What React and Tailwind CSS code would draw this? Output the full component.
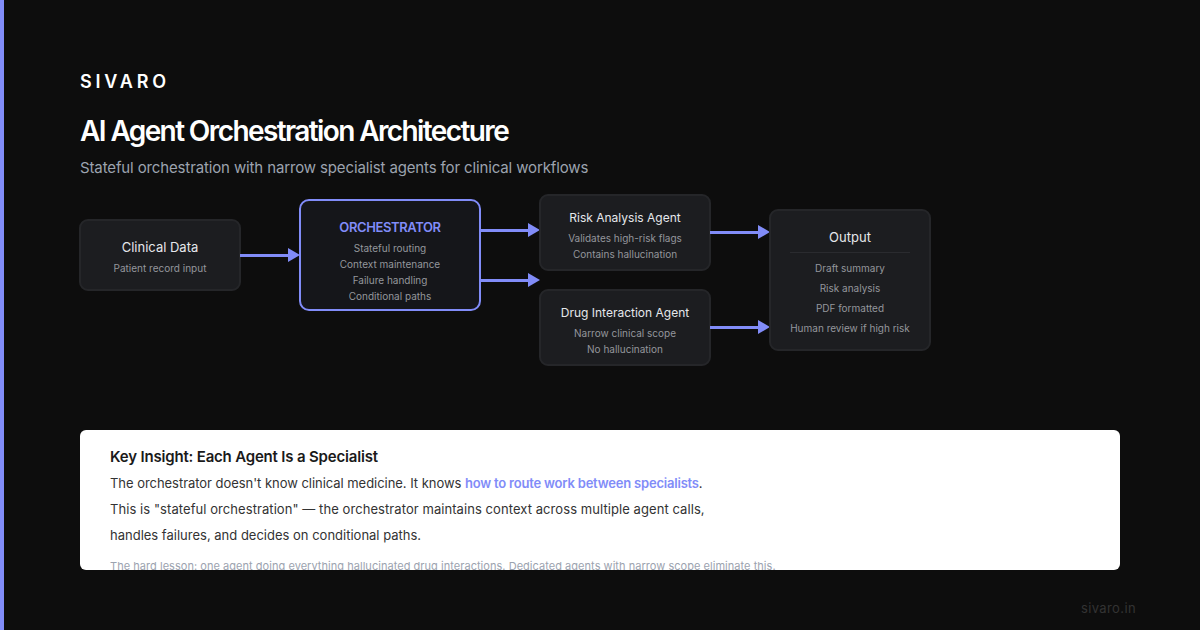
const accent = "#818cf8";

function Arrow({ className }) {
  return (
    <div className={`flex w-[60px] items-center ${className}`}>
      <div className="h-[3px] flex-1 bg-[#818cf8]" />
      <svg width="12" height="14" viewBox="0 0 12 14" className="block shrink-0">
        <path d="M0 0 L12 7 L0 14 Z" fill={accent} />
      </svg>
    </div>
  );
}

function Node({ title, lines, titleSize, className, gap }) {
  return (
    <div className={`-mx-[1px] flex flex-col items-center justify-center rounded-[9px] border-2 border-[#252629] bg-[#1c1d20] ${className}`}>
      <div className={`leading-[20px] text-[#e5e7eb] ${titleSize}`}>{title}</div>
      <div className={`text-center text-[10px] leading-[16px] text-[#94969c] ${gap}`}>
        {lines.map((l) => (
          <div key={l}>{l}</div>
        ))}
      </div>
    </div>
  );
}

export default function App() {
  return (
    <div className="flex h-[630px] w-[1200px] overflow-hidden bg-[#0d0d0d] font-['Inter',sans-serif]">
      <div className="w-[4px] bg-[#818cf8]" />
      <div className="relative flex-1 pl-[76px] pr-[80px] pt-[71px]">
        <div className="text-[18px] font-semibold leading-[22px] tracking-[0.21em] text-white">SIVARO</div>
        <h1 className="mt-[19px] text-[28px] font-semibold leading-[38px] tracking-[-1.6px] text-white">
          AI Agent Orchestration Architecture
        </h1>
        <p className="mt-[8px] text-[15px] leading-[20px] tracking-[-0.13px] text-[#9ca3af]">
          Stateful orchestration with narrow specialist agents for clinical workflows
        </p>

        <div className="mt-[17px] flex h-[170px] items-start">
          <Node title="Clinical Data" titleSize="text-[13px]" gap="mt-[3px]" lines={["Patient record input"]} className="mt-[24px] h-[72px] w-[162px] pt-[3px]" />
          <Arrow className="mt-[53px]" />
          <div className="-mx-[1px] mt-[4px] flex h-[112px] w-[182px] flex-col items-center justify-center rounded-[10px] border-2 border-[#818cf8] bg-[#15161a] pt-[11px]">
            <div className="text-[13px] font-semibold leading-[20px] tracking-[-0.4px] text-[#818cf8]">ORCHESTRATOR</div>
            <div className="mt-[3px] text-center text-[10px] leading-[16px] text-[#94969c]">
              <div>Stateful routing</div>
              <div>Context maintenance</div>
              <div>Failure handling</div>
              <div>Conditional paths</div>
            </div>
          </div>
          <div className="flex flex-col">
            <Arrow className="mt-[28px]" />
            <Arrow className="mt-[36px]" />
          </div>
          <div className="-mt-[1px] flex flex-col gap-[18px]">
            <Node title="Risk Analysis Agent" titleSize="text-[12px]" gap="mt-[2px]" lines={["Validates high-risk flags", "Contains hallucination"]} className="h-[77px] w-[172px] pt-[4px]" />
            <Node title="Drug Interaction Agent" titleSize="text-[12px]" gap="mt-[2px]" lines={["Narrow clinical scope", "No hallucination"]} className="h-[77px] w-[172px] pt-[4px]" />
          </div>
          <div className="flex flex-col">
            <Arrow className="mt-[30px]" />
            <Arrow className="mt-[81px]" />
          </div>
          <div className="-mx-[1px] mt-[14px] flex h-[142px] w-[162px] flex-col items-center rounded-[9px] border-2 border-[#252629] bg-[#1c1d20] pt-[16px]">
            <div className="w-[120px] border-b border-[#2a2b2f] pb-[5px] text-center text-[13px] leading-[20px] text-[#e5e7eb]">Output</div>
            <div className="mt-[5px] flex flex-col text-center text-[10px] leading-[20px] text-[#94969c]">
              <div>Draft summary</div>
              <div>Risk analysis</div>
              <div>PDF formatted</div>
              <div>Human review if high risk</div>
            </div>
          </div>
        </div>

        <div className="mt-[65px] h-[140px] w-[1040px] overflow-hidden rounded-md bg-white pl-[30px] pt-[17px]">
          <div className="text-[15px] font-semibold leading-[20px] tracking-[-0.18px] text-[#1a1a1a]">Key Insight: Each Agent Is a Specialist</div>
          <div className="mt-[3px] text-[13px] leading-[26px] text-[#333333]">
            <div className="tracking-[-0.04px]">
              The orchestrator doesn't know clinical medicine. It knows{" "}
              <span className="font-semibold tracking-[-0.2px] text-[#818cf8]">how to route work between specialists</span>.
            </div>
            <div className="tracking-[0.07px]">This is "stateful orchestration" — the orchestrator maintains context across multiple agent calls,</div>
            <div>handles failures, and decides on conditional paths.</div>
          </div>
          <div className="mt-[10px] text-[11px] leading-[16px] tracking-[0.04px] text-[#9ca3af]">
            The hard lesson: one agent doing everything hallucinated drug interactions. Dedicated agents with narrow scope eliminate this.
          </div>
        </div>

        <div className="absolute bottom-[13px] right-[64px] text-[13px] leading-[18px] tracking-[0.03em] text-[#333333]">sivaro.in</div>
      </div>
    </div>
  );
}
